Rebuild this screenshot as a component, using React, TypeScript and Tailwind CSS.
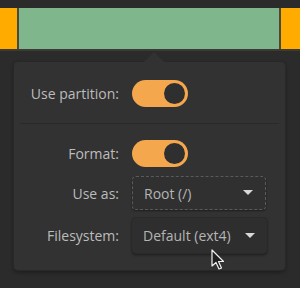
function Toggle() {
  return (
    <div className="w-[56px] h-[27px] rounded-full bg-[#f5a74d] flex items-center justify-end pr-[3px]">
      <div className="w-[21px] h-[21px] rounded-full bg-[#2f2f2f]" />
    </div>
  );
}

function Caret() {
  return (
    <svg width="10" height="6" viewBox="0 0 10 6">
      <path d="M0 0 L10 0 L5 5 Z" fill="#d8d8d8" />
    </svg>
  );
}

function Row({ label, children, h }: { label: string; children: React.ReactNode; h: string }) {
  return (
    <div className={`flex items-center ${h}`}>
      <span className="w-[105px] text-right text-[14px] text-[#bcbcbc]">{label}</span>
      <div className="ml-[13px]">{children}</div>
    </div>
  );
}

export default function App() {
  return (
    <div className="w-[300px] h-[288px] bg-[#2b2b2b] overflow-hidden relative" style={{ fontFamily: '"Open Sans", "Noto Sans", sans-serif' }}>
      <div className="mt-[8px] h-[43px] flex gap-[2px] bg-[#4a4a3a] border-b-2 border-[#3b3b34]">
        <div className="w-[17px] bg-[#ffab00]" />
        <div className="flex-1 bg-[#7fb68c]" />
        <div className="w-[19px] bg-[#ffab00]" />
      </div>

      <div className="relative mt-[11px] ml-[14px] w-[271px] h-[208px] bg-[#323232] rounded-[4px] shadow-[0_0_0_1px_#282828,0_2px_4px_rgba(0,0,0,0.4)]">
        <div className="absolute left-[130px] -top-[10px] w-0 h-0 border-l-[10px] border-r-[10px] border-b-[10px] border-l-transparent border-r-transparent border-b-[#323232]" />
        <div className="pt-[18px]">
          <Row label="Use partition:" h="h-[27px]">
            <Toggle />
          </Row>
          <div className="mx-[6px] mt-[16px] h-px bg-[#2a2a2a]" />
          <div className="mt-[16px]">
            <Row label="Format:" h="h-[27px]">
              <Toggle />
            </Row>
          </div>
          <div className="mt-[9px]">
            <Row label="Use as:" h="h-[34px]">
              <div className="w-[134px] h-[34px] rounded-[4px] border border-dashed border-[#5a5a5a] bg-[#303030] shadow-[0_1px_2px_rgba(0,0,0,0.4)] flex items-center justify-between pl-[11px] pr-[12px] text-[14px] text-[#b5b5b5]">
                <span>Root (/)</span>
                <Caret />
              </div>
            </Row>
          </div>
          <div className="mt-[8px]">
            <Row label="Filesystem:" h="h-[35px]">
              <div className="w-[135px] h-[35px] rounded-[4px] bg-[#2e2e2e] shadow-[0_0_0_1px_#292929,0_2px_3px_rgba(0,0,0,0.45)] flex items-center justify-between pl-[11px] pr-[12px] text-[14px] text-[#b5b5b5]">
                <span>Default (ext4)</span>
                <Caret />
              </div>
            </Row>
          </div>
        </div>
      </div>

      <svg className="absolute left-[211px] top-[249px]" width="14" height="22" viewBox="0 0 14 22">
        <path d="M1 1 L1 17 L5 13.5 L8 20 L10.5 19 L7.5 12.5 L12.5 12.5 Z" fill="#1e1e1e" stroke="#f0f0f0" strokeWidth="1.2" strokeLinejoin="round" />
      </svg>
    </div>
  );
}
